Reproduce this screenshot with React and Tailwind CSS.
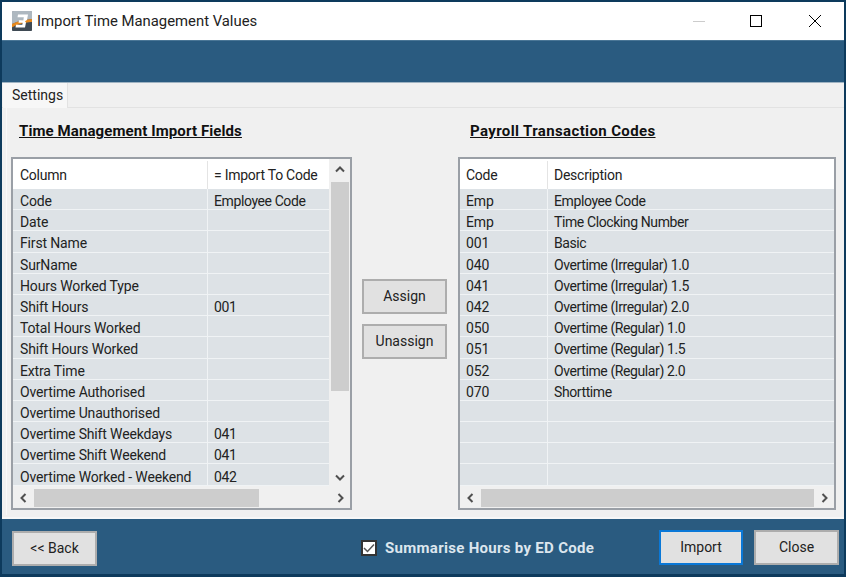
const font = { fontFamily: 'Roboto, sans-serif' }

const leftRows = [
  ['Code', 'Employee Code'],
  ['Date', ''],
  ['First Name', ''],
  ['SurName', ''],
  ['Hours Worked Type', ''],
  ['Shift Hours', '001'],
  ['Total Hours Worked', ''],
  ['Shift Hours Worked', ''],
  ['Extra Time', ''],
  ['Overtime Authorised', ''],
  ['Overtime Unauthorised', ''],
  ['Overtime Shift Weekdays', '041'],
  ['Overtime Shift Weekend', '041'],
  ['Overtime Worked - Weekend', '042'],
]

const rightRows = [
  ['Emp', 'Employee Code'],
  ['Emp', 'Time Clocking Number'],
  ['001', 'Basic'],
  ['040', 'Overtime (Irregular) 1.0'],
  ['041', 'Overtime (Irregular) 1.5'],
  ['042', 'Overtime (Irregular) 2.0'],
  ['050', 'Overtime (Regular) 1.0'],
  ['051', 'Overtime (Regular) 1.5'],
  ['052', 'Overtime (Regular) 2.0'],
  ['070', 'Shorttime'],
  ['', ''],
  ['', ''],
  ['', ''],
  ['', ''],
]

const Chevron = ({ dir }) => {
  const d = {
    up: 'M1 6.5 5 2.5 9 6.5',
    down: 'M1 3.5 5 7.5 9 3.5',
    left: 'M6.5 1 2.5 5 6.5 9',
    right: 'M3.5 1 7.5 5 3.5 9',
  }[dir]
  return (
    <svg width="10" height="10" viewBox="0 0 10 10" fill="none" stroke="#505050" strokeWidth="2">
      <path d={d} />
    </svg>
  )
}

const Grid = ({ cols, headers, rows, colA, padA, vscroll, thumbClass }) => (
  <div className={`h-[353px] border-2 border-[#9a9fa6] bg-[#f0f0f0] flex flex-col ${cols}`}>
    <div className="flex flex-1 min-h-0">
      <div className="flex-1 min-w-0 flex flex-col">
        <div className="flex h-[30px] pt-[2px] bg-white text-[14px] text-[#222] tracking-[-0.25px]">
          <div className={`${colA} ${padA} flex items-center border-r border-[#e4e4e4]`}>{headers[0]}</div>
          <div className="flex-1 pl-[6px] flex items-center">{headers[1]}</div>
        </div>
        {rows.map((r, i) => (
          <div key={i} className="flex h-[21.2px] bg-[#dde2e6] border-b border-[#f0f3f5] text-[14px] text-[#222] leading-none whitespace-nowrap">
            <div className={`${colA} ${padA} pt-[4px] flex items-center border-r border-[#f0f3f5] tracking-[-0.15px]`}>{r[0]}</div>
            <div className="flex-1 pl-[6px] pt-[4px] flex items-center tracking-[-0.4px]">{r[1]}</div>
          </div>
        ))}
      </div>
      {vscroll && (
        <div className="w-[21px] flex flex-col items-center">
          <div className="h-[22px] flex items-center justify-center"><Chevron dir="up" /></div>
          <div className="w-full flex-1 pt-[1px]">
            <div className="h-[209px] w-[18px] mx-auto bg-[#cdcdcd]"></div>
          </div>
          <div className="h-[22px] flex items-center justify-center"><Chevron dir="down" /></div>
        </div>
      )}
    </div>
    <div className="h-[20px] shrink-0 flex items-center">
      <div className="w-[21px] flex justify-center"><Chevron dir="left" /></div>
      <div className="flex-1 h-[18px]">
        <div className={`h-full bg-[#cdcdcd] ${thumbClass}`}></div>
      </div>
      <div className="w-[20px] flex justify-center"><Chevron dir="right" /></div>
    </div>
  </div>
)

const Btn = ({ className = '', children }) => (
  <button className={`h-[35px] bg-[#e1e1e1] text-[14px] text-[#222] border-2 border-[#adadad] ${className}`}>
    {children}
  </button>
)

export default function App() {
  return (
    <div style={font} className="w-[846px] h-[577px] bg-[#0d3a5c] pt-[2px] pb-[3px] px-[2px] flex flex-col overflow-hidden">
      <div className="h-[38px] bg-white flex items-center shrink-0">
        <svg width="20" height="20" viewBox="0 0 20 20" className="ml-[10px] mr-[5px]">
          <rect width="20" height="20" rx="1.500" fill="#56606a" />
          <path d="M0 1.500A1.500 1.500 0 0 1 1.500 0H18.500A1.500 1.500 0 0 1 20 1.500V8C13 9 6 10 0 13Z" fill="#aeb8c0" />
          <path d="M0 13C6 10 13 9 20 8V11C13 12 6 13 0 16.500Z" fill="#e8891c" />
          <path d="M0 16.500C6 13 13 12 20 11V18.500A1.500 1.500 0 0 1 18.500 20H1.500A1.500 1.500 0 0 1 0 18.500Z" fill="#3f4a54" />
          <path d="M6 3.500H16L15 9 13 10.200 14 11.500 13 16.500H3.500L4 13.800H10.300L10.700 11.700H6.500L7 9.200H11.400L11.800 6.200H5.500Z" fill="#fff" />
        </svg>
        <span className="text-[14.85px] text-[#222]">Import Time Management Values</span>
        <div className="ml-auto flex items-center">
          <svg width="14" height="14" viewBox="0 0 14 14" className="mr-[44px]"><path d="M1 7.500H13" stroke="#ccc" strokeWidth="1" /></svg>
          <svg width="12" height="12" viewBox="0 0 12 12" className="mr-[47px]" fill="none"><rect x="0.500" y="0.500" width="11" height="11" stroke="#000" /></svg>
          <svg width="12" height="12" viewBox="0 0 12 12" className="mr-[23px]" fill="none"><path d="M0 0 12 12M12 0 0 12" stroke="#000" /></svg>
        </div>
      </div>

      <div className="h-[42px] bg-[#2a5b80] shrink-0 border-t border-[#4a7696]"></div>

      <div className="flex-1 min-h-0 bg-[#f0f0f0] flex flex-col border-t border-[#9fb3c2]">
        <div className="h-[25px] shrink-0 flex items-end border-b border-[#e2e2e2]">
          <div className="ml-[1px] w-[65px] h-[25px] -mb-[1px] bg-[#f7f7f7] text-[14px] text-[#222] pl-[9px] flex items-center border-r border-[#e2e2e2]">Settings</div>
        </div>
        <div className="flex-1 min-h-0 mx-[4px] mb-[2px] pl-[4px] pr-[5px] pt-[12px] flex bg-[#f0f0f0] border-l border-[#f8f8f8]">
          <div className="w-[341px] shrink-0 flex flex-col">
            <h2 className="h-[38px] -mb-[1px] pl-[8px] pt-[1px] text-[15px] leading-[20px] font-bold text-[#111] underline tracking-[0.1px]">Time Management Import Fields</h2>
            <Grid cols="w-[341px]" colA="w-[195px]" padA="pl-[7px]" headers={['Column', '= Import To Code']} rows={leftRows} vscroll thumbClass="w-[225px]" />
          </div>
          <div className="w-[106px] shrink-0 flex flex-col items-center pt-[159px] pr-[1px] gap-[10px]">
            <Btn className="w-[85px]">Assign</Btn>
            <Btn className="w-[85px]">Unassign</Btn>
          </div>
          <div className="w-[378px] shrink-0 flex flex-col">
            <h2 className="h-[38px] -mb-[1px] pl-[12px] pt-[1px] text-[15px] leading-[20px] font-bold text-[#111] underline tracking-[0.37px]">Payroll Transaction Codes</h2>
            <Grid cols="w-[378px]" colA="w-[88px]" padA="pl-[6px]" headers={['Code', 'Description']} rows={rightRows} thumbClass="w-full" />
          </div>
        </div>
      </div>

      <div className="h-[57px] bg-[#2a5b80] shrink-0 flex items-center pt-[3px] border-t-2 border-[#f7f7f7]">
        <Btn className="ml-[10px] w-[85px]">&lt;&lt; Back</Btn>
        <label className="ml-[264px] flex items-center">
          <span className="w-[16px] h-[16px] bg-white border-2 border-[#333] flex items-center justify-center">
            <svg width="12" height="12" viewBox="0 0 12 12" fill="none" stroke="#555" strokeWidth="1.500"><path d="M1 6 4.500 9.500 11 2.500" /></svg>
          </span>
          <span className="ml-[8px] text-[15px] font-bold text-[#dce6ee] tracking-[0.3px]">Summarise Hours by ED Code</span>
        </label>
        <Btn className="ml-auto w-[84px] !border-[#0a78d7] -mt-[2px]">Import</Btn>
        <Btn className="ml-[11px] mr-[5px] w-[85px] -mt-[2px]">Close</Btn>
      </div>
    </div>
  )
}
